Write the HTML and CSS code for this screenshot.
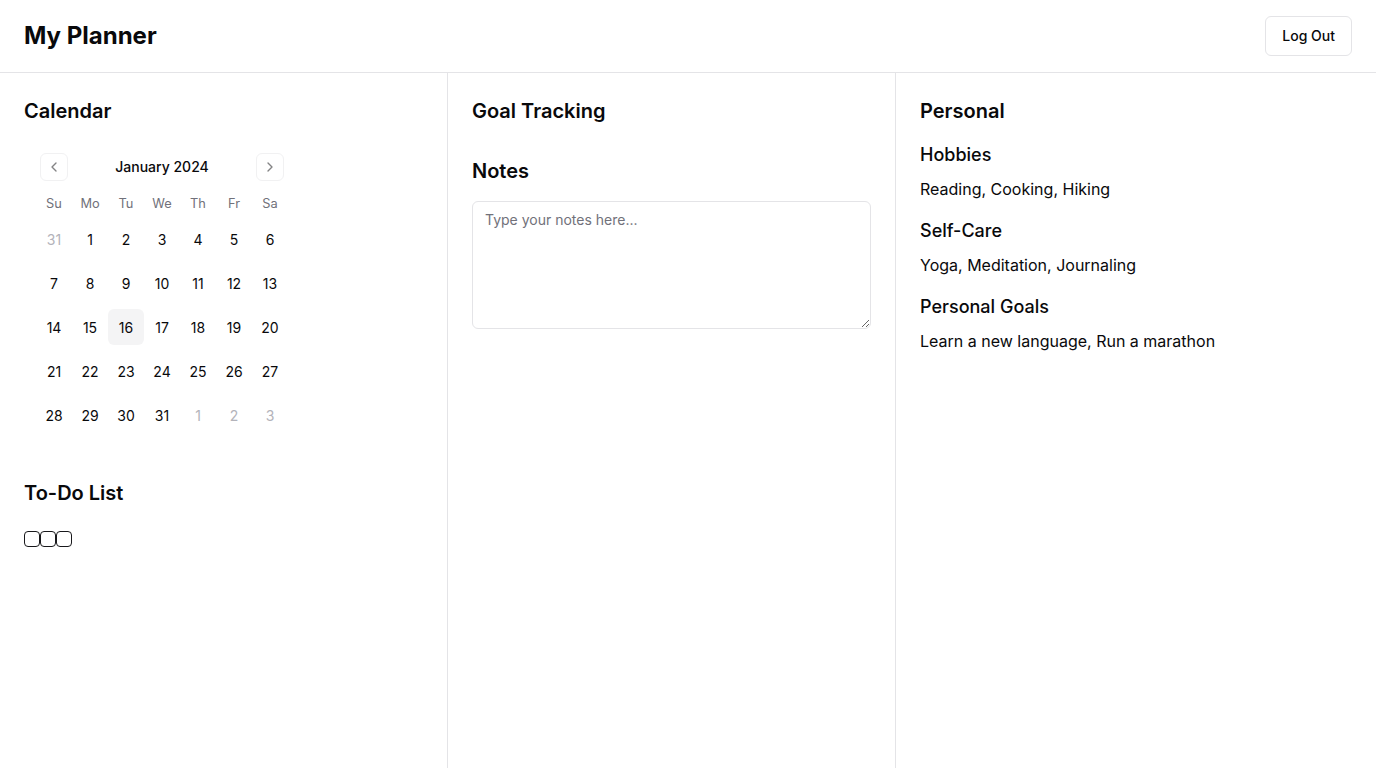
FILE: index.html
```html
<!DOCTYPE html>
<html lang="en">
<head>
<meta charset="utf-8">
<title>My Planner</title>
<link rel="stylesheet" href="styles.css">
</head>
<body>
<header class="topbar">
  <h1 class="brand">My Planner</h1>
  <button class="btn-outline">Log Out</button>
</header>
<main class="columns">
  <section class="col">
    <h2 class="heading">Calendar</h2>
    <div class="calendar">
      <div class="caption">
        <button class="nav-btn nav-prev" aria-label="Previous month">
          <svg width="16" height="16" viewBox="0 0 24 24" fill="none" stroke="currentColor" stroke-width="2" stroke-linecap="round" stroke-linejoin="round"><path d="m15 18-6-6 6-6"/></svg>
        </button>
        <span class="caption-label">January 2024</span>
        <button class="nav-btn nav-next" aria-label="Next month">
          <svg width="16" height="16" viewBox="0 0 24 24" fill="none" stroke="currentColor" stroke-width="2" stroke-linecap="round" stroke-linejoin="round"><path d="m9 18 6-6-6-6"/></svg>
        </button>
      </div>
      <div class="week head">
        <span class="head-cell">Su</span><span class="head-cell">Mo</span><span class="head-cell">Tu</span><span class="head-cell">We</span><span class="head-cell">Th</span><span class="head-cell">Fr</span><span class="head-cell">Sa</span>
      </div>
      <div class="week">
        <span class="day outside">31</span><span class="day">1</span><span class="day">2</span><span class="day">3</span><span class="day">4</span><span class="day">5</span><span class="day">6</span>
      </div>
      <div class="week">
        <span class="day">7</span><span class="day">8</span><span class="day">9</span><span class="day">10</span><span class="day">11</span><span class="day">12</span><span class="day">13</span>
      </div>
      <div class="week">
        <span class="day">14</span><span class="day">15</span><span class="day today">16</span><span class="day">17</span><span class="day">18</span><span class="day">19</span><span class="day">20</span>
      </div>
      <div class="week">
        <span class="day">21</span><span class="day">22</span><span class="day">23</span><span class="day">24</span><span class="day">25</span><span class="day">26</span><span class="day">27</span>
      </div>
      <div class="week">
        <span class="day">28</span><span class="day">29</span><span class="day">30</span><span class="day">31</span><span class="day outside">1</span><span class="day outside">2</span><span class="day outside">3</span>
      </div>
    </div>
    <h2 class="heading todo-heading">To-Do List</h2>
    <div class="todo">
      <span class="checkbox"></span><span class="checkbox"></span><span class="checkbox"></span>
    </div>
  </section>
  <section class="col">
    <h2 class="heading goal-heading">Goal Tracking</h2>
    <h2 class="heading notes-heading">Notes</h2>
    <textarea class="notes" placeholder="Type your notes here..."></textarea>
  </section>
  <section class="col col-last">
    <h2 class="heading personal-heading">Personal</h2>
    <div class="block">
      <h3 class="subheading">Hobbies</h3>
      <p class="text">Reading, Cooking, Hiking</p>
    </div>
    <div class="block">
      <h3 class="subheading">Self-Care</h3>
      <p class="text">Yoga, Meditation, Journaling</p>
    </div>
    <div class="block">
      <h3 class="subheading">Personal Goals</h3>
      <p class="text">Learn a new language, Run a marathon</p>
    </div>
  </section>
</main>
</body>
</html>
```

FILE: styles.css
```css
* { box-sizing: border-box; }
html, body { height: 100%; }
body {
  margin: 0;
  font-family: Inter, "Noto Sans", sans-serif;
  color: #09090b;
  background: #ffffff;
  display: flex;
  flex-direction: column;
}
.topbar {
  height: 73px;
  flex: 0 0 auto;
  display: flex;
  align-items: center;
  justify-content: space-between;
  padding: 0 24px;
  border-bottom: 1px solid #e4e4e7;
}
.brand {
  margin: 0;
  font-size: 24px;
  line-height: 32px;
  font-weight: 700;
}
.btn-outline {
  height: 40px;
  padding: 0 16px;
  border: 1px solid #e4e4e7;
  border-radius: 6px;
  background: #fff;
  font-family: Inter, sans-serif;
  font-size: 14px;
  font-weight: 500;
  color: #09090b;
  margin-top: -1px;
}
.columns {
  flex: 1 1 auto;
  display: grid;
  grid-template-columns: 448px 448px 1fr;
}
.col {
  padding: 24px;
  border-right: 1px solid #e4e4e7;
  display: flex;
  flex-direction: column;
  align-items: flex-start;
}
.col-last { border-right: none; }
.heading {
  margin: 0;
  font-size: 20px;
  line-height: 28px;
  font-weight: 600;
}
.calendar {
  margin-top: 16px;
  padding: 12px;
  width: 276px;
}
.caption {
  position: relative;
  display: flex;
  align-items: center;
  justify-content: center;
  height: 28px;
}
.caption-label {
  font-size: 14px;
  line-height: 20px;
  font-weight: 500;
}
.nav-btn {
  position: absolute;
  top: 0;
  width: 28px;
  height: 28px;
  padding: 0;
  border: 1px solid #e4e4e7;
  border-radius: 6px;
  background: transparent;
  color: #09090b;
  opacity: 0.5;
  display: flex;
  align-items: center;
  justify-content: center;
}
.nav-prev { left: 4px; }
.nav-next { right: 4px; }
.week {
  display: flex;
  margin-top: 8px;
}
.week.head { margin-top: 12px; }
.head-cell {
  width: 36px;
  height: 20px;
  padding-top: 1px;
  font-size: 12.8px;
  line-height: 20px;
  text-align: center;
  color: #71717a;
}
.day {
  width: 36px;
  height: 36px;
  display: flex;
  align-items: center;
  justify-content: center;
  font-size: 14px;
  border-radius: 6px;
}
.day.outside { color: #a1a1aa; opacity: 0.8; }
.day.today { background: #f4f4f5; }
.todo-heading { margin-top: 34px; }
.todo {
  display: flex;
  margin-top: 24px;
}
.checkbox {
  width: 16px;
  height: 16px;
  border: 1px solid #18181b;
  border-radius: 4px;
}
.goal-heading { margin-bottom: 32px; }
.notes {
  margin-top: 16px;
  width: 100%;
  height: 128px;
  padding: 8px 12px;
  border: 1px solid #e4e4e7;
  border-radius: 6px;
  font-family: Inter, sans-serif;
  font-size: 14px;
  line-height: 20px;
  color: #09090b;
  background: #fff;
}
.notes::placeholder { color: #71717a; }
.personal-heading { margin-bottom: 16px; }
.block { margin-bottom: 16px; }
.subheading {
  margin: 0 0 8px;
  font-size: 18px;
  line-height: 28px;
  font-weight: 500;
}
.text {
  margin: 0;
  font-size: 16px;
  line-height: 24px;
  color: #09090b;
}
```
